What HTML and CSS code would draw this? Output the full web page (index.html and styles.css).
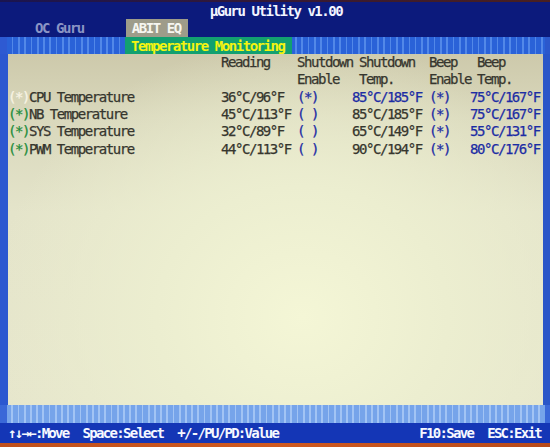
FILE: index.html
```html
<!DOCTYPE html>
<html>
<head>
<meta charset="utf-8">
<link rel="stylesheet" href="styles.css">
</head>
<body>
<div class="screen">
  <div class="edge-top"></div>
  <div class="titlebar"><span class="title">µGuru Utility v1.00</span></div>
  <div class="tabs">
    <span class="tab">OC Guru</span>
    <span class="tab tab-active">ABIT EQ</span>
  </div>
  <div class="stripe stripe-top">
    <span class="section">Temperature Monitoring</span>
  </div>
  <div class="main">
    <div class="panel">
      <div class="grid">
        <span></span><span>Reading</span><span>Shutdown</span><span class="hd">Shutdown</span><span>Beep</span><span class="hd">Beep</span>
        <span></span><span></span><span>Enable</span><span class="hd">Temp.</span><span>Enable</span><span class="hd">Temp.</span>

        <span><span class="sel">(*)</span>CPU Temperature</span><span>36°C/96°F</span><span class="blue">(*)</span><span class="blue">85°C/185°F</span><span class="blue">(*)</span><span class="blue">75°C/167°F</span>
        <span><span class="on">(*)</span>NB Temperature</span><span>45°C/113°F</span><span class="blue">( )</span><span>85°C/185°F</span><span class="blue">(*)</span><span class="blue">75°C/167°F</span>
        <span><span class="on">(*)</span>SYS Temperature</span><span>32°C/89°F</span><span class="blue">( )</span><span>65°C/149°F</span><span class="blue">(*)</span><span class="blue">55°C/131°F</span>
        <span><span class="on">(*)</span>PWM Temperature</span><span>44°C/113°F</span><span class="blue">( )</span><span>90°C/194°F</span><span class="blue">(*)</span><span class="blue">80°C/176°F</span>
      </div>
    </div>
  </div>
  <div class="stripe stripe-bottom"></div>
  <div class="footer">
    <div class="keys">
      <span>↑↓→←:Move</span>
      <span>Space:Select</span>
      <span>+/-/PU/PD:Value</span>
    </div>
    <div class="keys">
      <span>F10:Save</span>
      <span>ESC:Exit</span>
    </div>
  </div>
  <div class="edge-bottom"></div>
</div>
</body>
</html>
```
FILE: styles.css
```css
html, body {
  margin: 0;
  padding: 0;
}
body {
  width: 550px;
  height: 447px;
  overflow: hidden;
  background: #0c1a7c;
  font-family: "DejaVu Sans Mono", "Liberation Mono", monospace;
  font-size: 14px;
  letter-spacing: -1.45px;
}
.screen {
  display: flex;
  flex-direction: column;
  width: 550px;
  height: 447px;
}
.edge-top {
  height: 2px;
  background: linear-gradient(90deg, #1a1450, #3a1a30 60%, #4a2020);
}
.titlebar {
  height: 17px;
  display: flex;
  justify-content: center;
  align-items: center;
  background: #0c1a7c;
}
.title {
  color: #f2f4ff;
  font-weight: bold;
  padding-left: 2px;
}
.tabs {
  height: 18px;
  display: flex;
  align-items: stretch;
  background: #0c1a7c;
  padding-left: 35px;
}
.tab {
  display: flex;
  align-items: center;
  color: #8a94c4;
  font-weight: bold;
}
.tab-active {
  margin-left: 42px;
  padding: 0 7px 0 6px;
  background: #9e9c8a;
  color: #f6f6f0;
}
.stripe {
  display: flex;
  border-left: 7px solid #2e5ad2;
  border-right: 5px solid #2c58cc;
}
.stripe-top {
  height: 17px;
  background: repeating-linear-gradient(90deg, #2a62d8 0 4.6px, #5288e8 4.6px 6.3px);
  padding-left: 118px;
}
.section {
  display: flex;
  align-items: center;
  padding: 0 7px 0 6px;
  background: #12a070;
  color: #f4f410;
  font-weight: bold;
}
.main {
  flex: 1;
  display: flex;
  border-left: 8px solid #2c58d0;
  border-right: 7px solid #2a56c8;
}
.panel {
  flex: 1;
  padding-left: 0;
  background:
    radial-gradient(ellipse at 55% 75%, #f4f6d6 0%, #eceed0 35%, rgba(236,236,208,0) 75%),
    linear-gradient(180deg, #cdc9ab 0%, #d9d8bc 18%, #e4e4ca 45%, #e6e6cc 100%);
}
.grid {
  display: grid;
  grid-template-columns: 213px 76px 55px 77px 41px 1fr;
  grid-auto-rows: 17.35px;
  line-height: 17.35px;
  color: #36362e;
  white-space: pre;
  -webkit-text-stroke: 0.25px currentColor;
}
.hd {
  padding-left: 7px;
}
.sel {
  color: #f8f4e4;
}
.on {
  color: #1f8c3c;
}
.blue {
  color: #1c2ca4;
}
.stripe-bottom {
  height: 18px;
  background: repeating-linear-gradient(90deg, #76a4ea 0 4.4px, #a2c4f4 4.4px 6.2px);
  border-left-color: #3a68d8;
  border-right-color: #3a68d8;
}
.footer {
  height: 20px;
  display: flex;
  justify-content: space-between;
  align-items: center;
  padding: 0 9px 0 8px;
  background: #1436b6;
  color: #f6f8ff;
  font-weight: bold;
  letter-spacing: -1.7px;
}
.keys {
  display: flex;
  gap: 14px;
}
.edge-bottom {
  height: 4px;
  background: linear-gradient(90deg, #c0501c, #d05a20 50%, #b84a1a);
}
```
